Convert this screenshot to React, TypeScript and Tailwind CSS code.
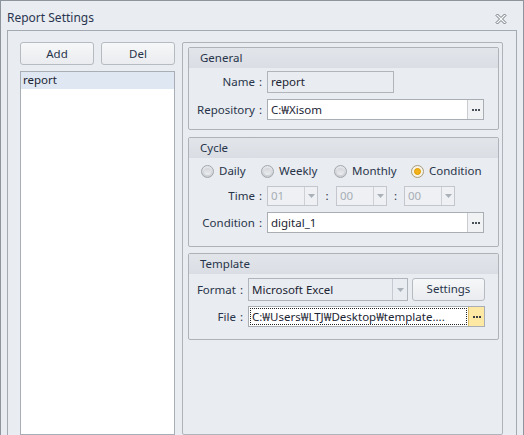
import React from 'react';

const font = { fontFamily: '"Noto Sans", "Liberation Sans", sans-serif' };

function Dots({ dark = false }: { dark?: boolean }) {
  return (
    <div className="flex items-center gap-[1px]">
      <span className={`w-[2px] h-[2px] ${dark ? 'bg-[#3a3f46]' : 'bg-[#4a5058]'}`} />
      <span className={`w-[2px] h-[2px] ${dark ? 'bg-[#3a3f46]' : 'bg-[#4a5058]'}`} />
      <span className={`w-[2px] h-[2px] ${dark ? 'bg-[#3a3f46]' : 'bg-[#4a5058]'}`} />
    </div>
  );
}

function Arrow() {
  return (
    <svg width="7" height="4" viewBox="0 0 7 4">
      <path d="M0 0H7L3.5 4Z" fill="#aab0b8" />
    </svg>
  );
}

function Group({ title, h, children }: { title: string; h: string; children: React.ReactNode }) {
  return (
    <div className={`${h} border border-[#aeb3ba] rounded-[2px] flex flex-col`}>
      <div className="h-[20px] bg-gradient-to-b from-[#e2e5ea] to-[#dadee4] flex items-center pl-[11px] text-[#28344a]">
        {title}
      </div>
      {children}
    </div>
  );
}

function Label({ text, w }: { text: string; w: string }) {
  return (
    <span className={`${w} flex justify-end gap-[4px] text-[#28344a]`}>
      <span>{text}</span>
      <span>:</span>
    </span>
  );
}

function Radio({ label, checked = false, w }: { label: string; checked?: boolean; w: string }) {
  return (
    <div className={`${w} flex items-center gap-[5px]`}>
      <span
        className={`w-[13px] h-[13px] rounded-full border flex items-center justify-center ${
          checked ? 'border-[#a59a7c] bg-[#f7f3e6]' : 'border-[#a3a8ae] bg-gradient-to-b from-[#e6e8eb] to-[#c9cdd2]'
        }`}
      >
        {checked ? (
          <span className="w-[7px] h-[7px] rounded-full bg-[#f3b21a] border border-[#e09a00]" />
        ) : (
          <span className="w-[7px] h-[7px] rounded-full bg-gradient-to-b from-[#d2d5d9] to-[#eceef0]" />
        )}
      </span>
      <span className="text-[#28344a]">{label}</span>
    </div>
  );
}

function Combo({ value }: { value: string }) {
  return (
    <div className="w-[51px] h-[20px] border border-[#c3c7cd] bg-[#eef0f3] flex">
      <span className="flex-1 pl-[3px] leading-[18px] text-[#a8aeb6]">{value}</span>
      <span className="w-[13px] border-l border-[#cdd1d6] flex items-center justify-center">
        <Arrow />
      </span>
    </div>
  );
}

function Field({ value, w }: { value: string; w: string }) {
  return (
    <div className={`${w} h-[21px] flex border border-[#a9aeb5] bg-white`}>
      <span className="flex-1 pl-[3px] leading-[19px] text-[#1b2433]">{value}</span>
      <span className="w-[16px] border-l border-[#c9cdd2] bg-[#f1f2f4] flex items-center justify-center">
        <Dots />
      </span>
    </div>
  );
}

export default function App() {
  return (
    <div
      style={font}
      className="w-[524px] h-[435px] overflow-hidden bg-[#e9ecf0] border-t border-l border-r border-[#8e949b] flex flex-col text-[11.5px] text-[#1f2a3a]"
    >
      {/* title bar */}
      <div className="h-[29px] flex items-center justify-between pl-[6px] pr-[16px] shrink-0">
        <span className="text-[12px] text-[#2a3650] pt-[4px]">Report Settings</span>
        <svg width="12" height="12" viewBox="0 0 12 12" className="mt-[6px]">
          <path
            d="M1 2.5L2.5 1L6 4.5L9.5 1L11 2.5L7.5 6L11 9.5L9.5 11L6 7.5L2.5 11L1 9.5L4.5 6Z"
            fill="#fafafa"
            stroke="#6f757d"
            strokeWidth="1"
            strokeLinejoin="round"
          />
        </svg>
      </div>

      {/* inner frame */}
      <div className="ml-[6px] mr-[6px] h-[460px] border-t border-l border-r border-[#a3a9b1] flex pl-[12px] pt-[11px] pr-[13px]">
        {/* left column */}
        <div className="w-[155px] flex flex-col">
          <div className="flex gap-[7px] h-[23px]">
            <button className="w-[74px] h-[23px] rounded-[3px] border border-[#b6bbc2] bg-gradient-to-b from-[#f6f7f8] to-[#eaecef] text-[#28344a]">
              Add
            </button>
            <button className="w-[74px] h-[23px] rounded-[3px] border border-[#b6bbc2] bg-gradient-to-b from-[#f6f7f8] to-[#eaecef] text-[#28344a]">
              Del
            </button>
          </div>
          <div className="mt-[6px] flex-1 border border-[#a8aeb5] bg-white">
            <div className="h-[17px] bg-[#dfe8f2] pl-[2px] leading-[16px] text-[#1b2433]">report</div>
          </div>
        </div>

        {/* right panel */}
        <div className="ml-[7px] w-[321px] border border-[#aeb3ba] rounded-[2px] pl-[5px] pr-[3px] pt-[4px] flex flex-col gap-[7px]">
          <Group title="General" h="h-[83px]">
            <div className="flex flex-col gap-[6px] pt-[3px]">
              <div className="flex items-center">
                <Label text="Name" w="w-[73px]" />
                <div className="ml-[5px] w-[127px] h-[22px] border border-[#b0b5bc] bg-[#e9ecf0] pl-[3px] leading-[20px] text-[#1b2433]">
                  report
                </div>
              </div>
              <div className="flex items-center">
                <Label text="Repository" w="w-[73px]" />
                <div className="ml-[5px]">
                  <Field value="C:₩Xisom" w="w-[217px]" />
                </div>
              </div>
            </div>
          </Group>

          <div className="flex flex-col gap-[6px]">
            <Group title="Cycle" h="h-[110px]">
              <div className="flex items-center pl-[12px] h-[26px]">
                <Radio label="Daily" w="w-[60px]" />
                <Radio label="Weekly" w="w-[73px]" />
                <Radio label="Monthly" w="w-[77px]" />
                <Radio label="Condition" checked w="w-[80px]" />
              </div>
              <div className="flex items-center mt-[2px]">
                <Label text="Time" w="w-[73px]" />
                <div className="ml-[5px] flex items-center">
                  <Combo value="01" />
                  <span className="w-[18px] text-center text-[#28344a]">:</span>
                  <Combo value="00" />
                  <span className="w-[17px] text-center text-[#28344a]">:</span>
                  <Combo value="00" />
                </div>
              </div>
              <div className="flex items-center mt-[6px]">
                <Label text="Condition" w="w-[73px]" />
                <div className="ml-[5px]">
                  <Field value="digital_1" w="w-[217px]" />
                </div>
              </div>
            </Group>

            <Group title="Template" h="h-[87px]">
              <div className="flex items-center mt-[4px]">
                <Label text="Format" w="w-[54px]" />
                <div className="ml-[5px] w-[160px] h-[23px] border border-[#b0b5bc] bg-[#e9ecf0] flex">
                  <span className="flex-1 pl-[3px] leading-[21px] text-[#1b2433]">Microsoft Excel</span>
                  <span className="w-[15px] border-l border-[#c6cad0] flex items-center justify-center">
                    <Arrow />
                  </span>
                </div>
                <button className="ml-[4px] -mt-[1px] w-[73px] h-[23px] rounded-[3px] border border-[#b6bbc2] bg-gradient-to-b from-[#f6f7f8] to-[#eaecef] text-[#28344a]">
                  Settings
                </button>
              </div>
              <div className="flex items-center mt-[5px]">
                <Label text="File" w="w-[54px]" />
                <div className="ml-[5px] w-[237px] h-[21px] flex border border-[#a9aeb5] bg-white">
                  <span className="flex-1 m-[1px] border border-dotted border-[#222] pl-[1px] leading-[15px] text-[#1b2433] whitespace-nowrap overflow-hidden">
                    C:₩Users₩LTJ₩Desktop₩template....
                  </span>
                  <span className="w-[16px] border-l border-[#e2c266] bg-[#fde8a4] flex items-center justify-center">
                    <Dots dark />
                  </span>
                </div>
              </div>
            </Group>
          </div>
        </div>
      </div>
    </div>
  );
}
